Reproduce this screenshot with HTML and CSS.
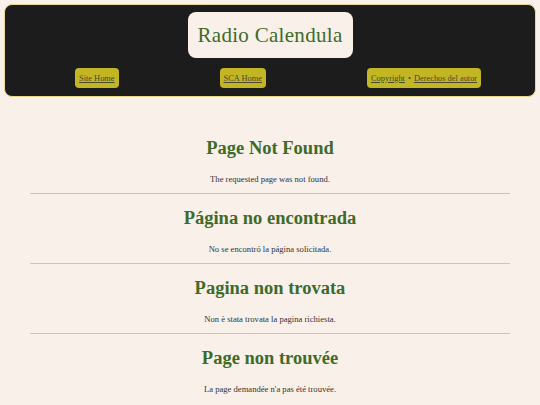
FILE: index.html
```html
<!DOCTYPE html>
<html lang="en">
<head>
<meta charset="utf-8">
<title>Radio Calendula</title>
<link rel="stylesheet" href="styles.css">
</head>
<body>
<header class="site-header">
  <div class="title-box"><span class="site-title">Radio Calendula</span></div>
  <nav class="nav">
    <span class="nav-btn"><a href="#">Site Home</a></span>
    <span class="nav-btn"><a href="#">SCA Home</a></span>
    <span class="nav-btn"><a href="#">Copyright</a> • <a href="#">Derechos del autor</a></span>
  </nav>
</header>
<main class="content">
  <section class="msg">
    <h1>Page Not Found</h1>
    <p>The requested page was not found.</p>
  </section>
  <hr class="sep">
  <section class="msg">
    <h1>Página no encontrada</h1>
    <p>No se encontró la página solicitada.</p>
  </section>
  <hr class="sep">
  <section class="msg">
    <h1>Pagina non trovata</h1>
    <p>Non è stata trovata la pagina richiesta.</p>
  </section>
  <hr class="sep">
  <section class="msg">
    <h1>Page non trouvée</h1>
    <p>La page demandée n'a pas été trouvée.</p>
  </section>
</main>
</body>
</html>
```
FILE: styles.css
```css
html, body {
  margin: 0;
  padding: 0;
}
body {
  background: #f9f0ea;
  font-family: "Liberation Serif", "DejaVu Serif", serif;
  color: #333;
}
.site-header {
  margin: 4px 4px 0 4px;
  background: #1c1c1c;
  border: 1px solid #e9d88c;
  border-radius: 8px;
  padding: 7px 0 8px 0;
  display: flex;
  flex-direction: column;
  align-items: center;
  gap: 10px;
}
.title-box {
  background: #f9f0ea;
  border-radius: 8px;
  width: 165px;
  height: 46px;
  display: flex;
  align-items: center;
  justify-content: center;
}
.site-title {
  font-size: 21px;
  color: #3d6b2a;
  letter-spacing: 0.3px;
}
.nav {
  align-self: stretch;
  display: flex;
  align-items: center;
  padding-left: 70px;
  gap: 101px;
}
.nav-btn {
  background: #c2b624;
  border-radius: 4px;
  height: 20px;
  padding: 0 4px;
  display: flex;
  align-items: center;
  gap: 3px;
  font-size: 8.4px;
  color: #4a4a2a;
}
.nav-btn a {
  color: #4a4a2a;
  text-decoration: underline;
}
.content {
  margin: 0 30px;
  padding-top: 39px;
  display: flex;
  flex-direction: column;
}
.msg {
  display: flex;
  flex-direction: column;
  align-items: center;
}
.msg h1 {
  margin: 0;
  font-size: 18.5px;
  line-height: 24px;
  color: #3d6b2a;
  font-weight: bold;
}
.msg p {
  margin: 13.5px 0 0 0;
  font-size: 8.6px;
  line-height: 11px;
  color: #333;
}
.sep {
  margin: 8.5px 0 12px 0;
  border: 0;
  border-top: 1px solid #c9c4c2;
  height: 0;
}
```
